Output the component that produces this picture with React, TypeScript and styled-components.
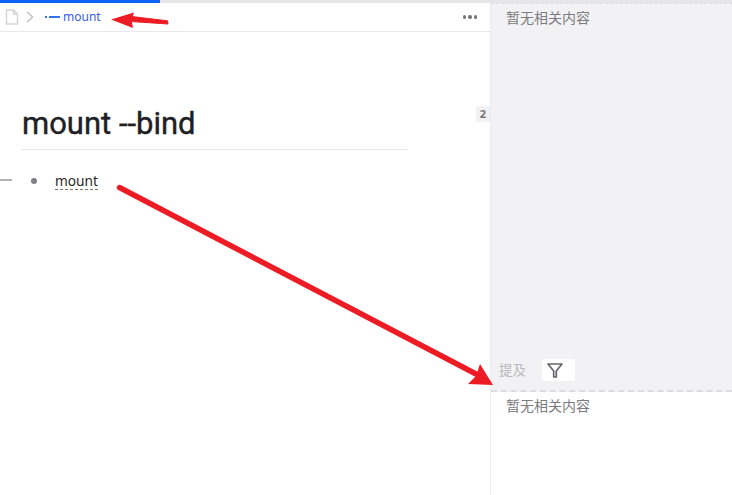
import styled, { createGlobalStyle } from "styled-components"

const GlobalStyle = createGlobalStyle`
  html, body {
    margin: 0;
    padding: 0;
    background: #fff;
    overflow: hidden;
  }
  #root {
    height: 495px;
  }
`

const FONT = `"Noto Sans", "Noto Sans CJK SC", sans-serif`

export default function App() {
  return (
    <>
      <GlobalStyle />
      <Page>
        <Progress />
        <Body>
          <Editor>
            <Breadcrumb>
              <svg width="14" height="16" viewBox="0 0 14 16" fill="none" stroke="#d4d4d6" strokeWidth="1.4">
                <path d="M1.5 1h7l4 4v10h-11z" />
                <path d="M8.5 1v4h4" />
              </svg>
              <svg width="10" height="14" viewBox="0 0 10 14" fill="none" stroke="#c4c4c8" strokeWidth="1.6">
                <path d="M2 2l5.5 5L2 12" />
              </svg>
              <Crumb>
                <svg width="15" height="4" viewBox="0 0 15 4" fill="#3573f0">
                  <rect x="0" y="1" width="2" height="2" />
                  <rect x="4" y="1" width="11" height="2" />
                </svg>
                <CrumbText>mount</CrumbText>
              </Crumb>
              <More>
                <Dot />
                <Dot />
                <Dot />
              </More>
            </Breadcrumb>
            <Content>
              <Title>mount --bind</Title>
              <ListRow>
                <Fold />
                <Bullet />
                <RefLink>mount</RefLink>
              </ListRow>
              <Count>2</Count>
            </Content>
          </Editor>
          <Side>
            <TopPanel>
              <Empty>暂无相关内容</Empty>
              <MentionBar>
                <MentionLabel>提及</MentionLabel>
                <FilterButton>
                  <svg width="16" height="15" viewBox="0 0 16 15" fill="none" stroke="#66666a" strokeWidth="1.7" strokeLinejoin="round">
                    <path d="M1 1h14L9.3 8v6H6.7V8z" />
                  </svg>
                </FilterButton>
              </MentionBar>
            </TopPanel>
            <BottomPanel>
              <Empty>暂无相关内容</Empty>
            </BottomPanel>
          </Side>
        </Body>
        <Annotations width="732" height="495" viewBox="0 0 732 495" fill="#ed1c24">
          <path d="M168 24L131 21.5L131.6 16.5L167.6 20.8Z" stroke="#ed1c24" strokeWidth="1" />
          <path d="M111 19.5L134 12.5L131.5 20L133 28Z" />
          <path d="M119.5 187.5L478 375" stroke="#ed1c24" strokeWidth="5.5" strokeLinecap="round" />
          <path d="M493 385L468 384L476 376L480 364Z" />
        </Annotations>
      </Page>
    </>
  )
}

const Page = styled.div`
  position: relative;
  width: 732px;
  height: 495px;
  display: flex;
  flex-direction: column;
  font-family: ${FONT};
  overflow: hidden;
`

const Progress = styled.div`
  flex: none;
  height: 3px;
  background: linear-gradient(to right, #0f62f5 0 160px, #e6e6e8 160px);
`

const Body = styled.div`
  flex: 1;
  min-height: 0;
  display: flex;
`

const Editor = styled.div`
  position: relative;
  flex: none;
  box-sizing: border-box;
  width: 491px;
  border-right: 1px solid #ececef;
`

const Breadcrumb = styled.div`
  box-sizing: border-box;
  height: 29px;
  display: flex;
  align-items: center;
  gap: 6px;
  padding: 0 13px 0 5px;
  border-bottom: 1px solid #e8e8ea;
`

const Crumb = styled.div`
  display: flex;
  align-items: center;
  gap: 3px;
  margin-left: 4px;
`

const CrumbText = styled.span`
  font-size: 12px;
  line-height: 16px;
  color: #3a5cf0;
`

const More = styled.div`
  margin-left: auto;
  display: flex;
  gap: 2px;
`

const Dot = styled.span`
  width: 3.5px;
  height: 3.5px;
  border-radius: 50%;
  background: #77777b;
`

const Content = styled.div`
  padding: 72px 0 0 22px;
`

const Title = styled.h1`
  width: 385px;
  margin: 0;
  height: 45px;
  border-bottom: 1px solid #e4e4e6;
  font-family: Roboto, ${FONT};
  font-size: 31px;
  font-weight: 400;
  -webkit-text-stroke: 0.4px #202024;
  line-height: 40px;
  color: #202024;
`

const ListRow = styled.div`
  position: relative;
  display: flex;
  align-items: center;
  height: 20px;
  margin: 21px 0 0 9px;
`

const Fold = styled.span`
  position: absolute;
  left: -31px;
  top: 8px;
  width: 12px;
  height: 2px;
  background: #b4b4b6;
`

const Bullet = styled.span`
  width: 6px;
  height: 6px;
  border-radius: 50%;
  background: #808084;
`

const RefLink = styled.span`
  margin-left: 18px;
  padding-top: 1px;
  font-size: 13.7px;
  line-height: 16px;
  color: #2a2a2e;
  border-bottom: 1px dashed #77777b;
`

const Count = styled.span`
  position: absolute;
  right: 0;
  top: 103px;
  width: 14px;
  height: 16px;
  border-radius: 2px 0 0 2px;
  background: #f2f2f5;
  color: #77777b;
  font-size: 11px;
  font-weight: 700;
  line-height: 16px;
  text-align: center;
`

const Side = styled.div`
  flex: 1;
  min-width: 0;
  display: flex;
  flex-direction: column;
`

const TopPanel = styled.div`
  box-sizing: border-box;
  height: 389px;
  display: flex;
  flex-direction: column;
  justify-content: space-between;
  background: #f2f2f5;
  border-top: 1px dashed #dcdce0;
  border-bottom: 2px dashed #dcdce0;
`

const BottomPanel = styled.div`
  flex: 1;
`

const Empty = styled.div`
  padding: 4px 15px 0;
  font-size: 14px;
  line-height: 20px;
  color: #7b7b80;
`

const MentionBar = styled.div`
  display: flex;
  align-items: center;
  gap: 16px;
  padding: 0 0 9px 8px;
`

const MentionLabel = styled.span`
  font-size: 13.5px;
  line-height: 20px;
  color: #b9b9bd;
`

const FilterButton = styled.div`
  width: 33px;
  height: 22px;
  display: flex;
  align-items: center;
  padding-left: 5px;
  box-sizing: border-box;
  border-radius: 2px;
  background: #fff;
`

const Annotations = styled.svg`
  position: absolute;
  inset: 0;
  pointer-events: none;
`
